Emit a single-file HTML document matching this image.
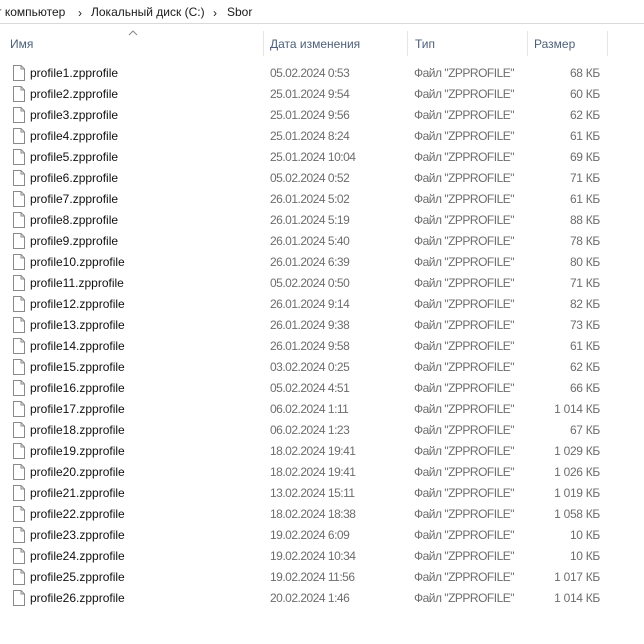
<!DOCTYPE html>
<html><head><meta charset="utf-8"><style>
body{margin:0;width:644px;height:644px;background:#fff;font-family:"Liberation Sans","DejaVu Sans",sans-serif;font-size:12px;overflow:hidden;position:relative}
.addr{position:absolute;left:0;top:0;width:644px;height:23px;border-bottom:1px solid #d9d9d9;}
.addr span{position:absolute;top:5px;color:#1a1a1a;font-size:12px}
.sep{color:#888;font-size:10px}
.hd{position:absolute;top:37px;color:#4d6079;font-size:12px}
.vl{position:absolute;top:31px;width:1px;height:25px;background:#e5e5e5}
.r{position:absolute;left:0;width:644px;height:21px}
.r .ic{position:absolute;left:13px;top:2px}
.r .n{position:absolute;left:30px;top:3px;color:#111}
.r .d{position:absolute;left:270px;top:3px;color:#6d6d6d;letter-spacing:-0.5px}
.r .t{position:absolute;left:414px;top:3px;color:#6d6d6d;letter-spacing:-0.5px}
.r .s{position:absolute;right:44px;top:3px;color:#6d6d6d;letter-spacing:-0.3px}
</style></head><body>
<div class="addr">
<span style="left:-4px">т компьютер</span><span class="sep" style="left:78px;top:6px">›</span>
<span style="left:91px">Локальный диск (C:)</span><span class="sep" style="left:213px;top:6px">›</span>
<span style="left:227px">Sbor</span>
</div>
<svg style="position:absolute;left:128px;top:30px" width="10" height="6"><path d="M1 5L5 1L9 5" fill="none" stroke="#888" stroke-width="1"/></svg>
<div class="hd" style="left:10px">Имя</div>
<div class="vl" style="left:263px"></div>
<div class="hd" style="left:270px">Дата изменения</div>
<div class="vl" style="left:407px"></div>
<div class="hd" style="left:415px">Тип</div>
<div class="vl" style="left:527px"></div>
<div class="hd" style="left:534px">Размер</div>
<div class="vl" style="left:607px"></div>
<div id="rows"></div>
<script>
var d=[["05.02.2024 0:53","68 КБ"],["25.01.2024 9:54","60 КБ"],["25.01.2024 9:56","62 КБ"],["25.01.2024 8:24","61 КБ"],["25.01.2024 10:04","69 КБ"],["05.02.2024 0:52","71 КБ"],["26.01.2024 5:02","61 КБ"],["26.01.2024 5:19","88 КБ"],["26.01.2024 5:40","78 КБ"],["26.01.2024 6:39","80 КБ"],["05.02.2024 0:50","71 КБ"],["26.01.2024 9:14","82 КБ"],["26.01.2024 9:38","73 КБ"],["26.01.2024 9:58","61 КБ"],["03.02.2024 0:25","62 КБ"],["05.02.2024 4:51","66 КБ"],["06.02.2024 1:11","1 014 КБ"],["06.02.2024 1:23","67 КБ"],["18.02.2024 19:41","1 029 КБ"],["18.02.2024 19:41","1 026 КБ"],["13.02.2024 15:11","1 019 КБ"],["18.02.2024 18:38","1 058 КБ"],["19.02.2024 6:09","10 КБ"],["19.02.2024 10:34","10 КБ"],["19.02.2024 11:56","1 017 КБ"],["20.02.2024 1:46","1 014 КБ"]];
var h="";
for(var i=0;i<d.length;i++){var y=63+i*21;
h+='<div class="r" style="top:'+y+'px"><svg class="ic" width="12" height="16"><path d="M0.5 0.5H8L11.5 4V15.5H0.5Z" fill="#fff" stroke="#8a8a8a"/><path d="M8 0.5V4H11.5" fill="none" stroke="#8a8a8a"/></svg><span class="n">profile'+(i+1)+'.zpprofile</span><span class="d">'+d[i][0]+'</span><span class="t">Файл "ZPPROFILE"</span><span class="s">'+d[i][1]+'</span></div>';}
document.getElementById("rows").innerHTML=h;
</script>
</body></html>
